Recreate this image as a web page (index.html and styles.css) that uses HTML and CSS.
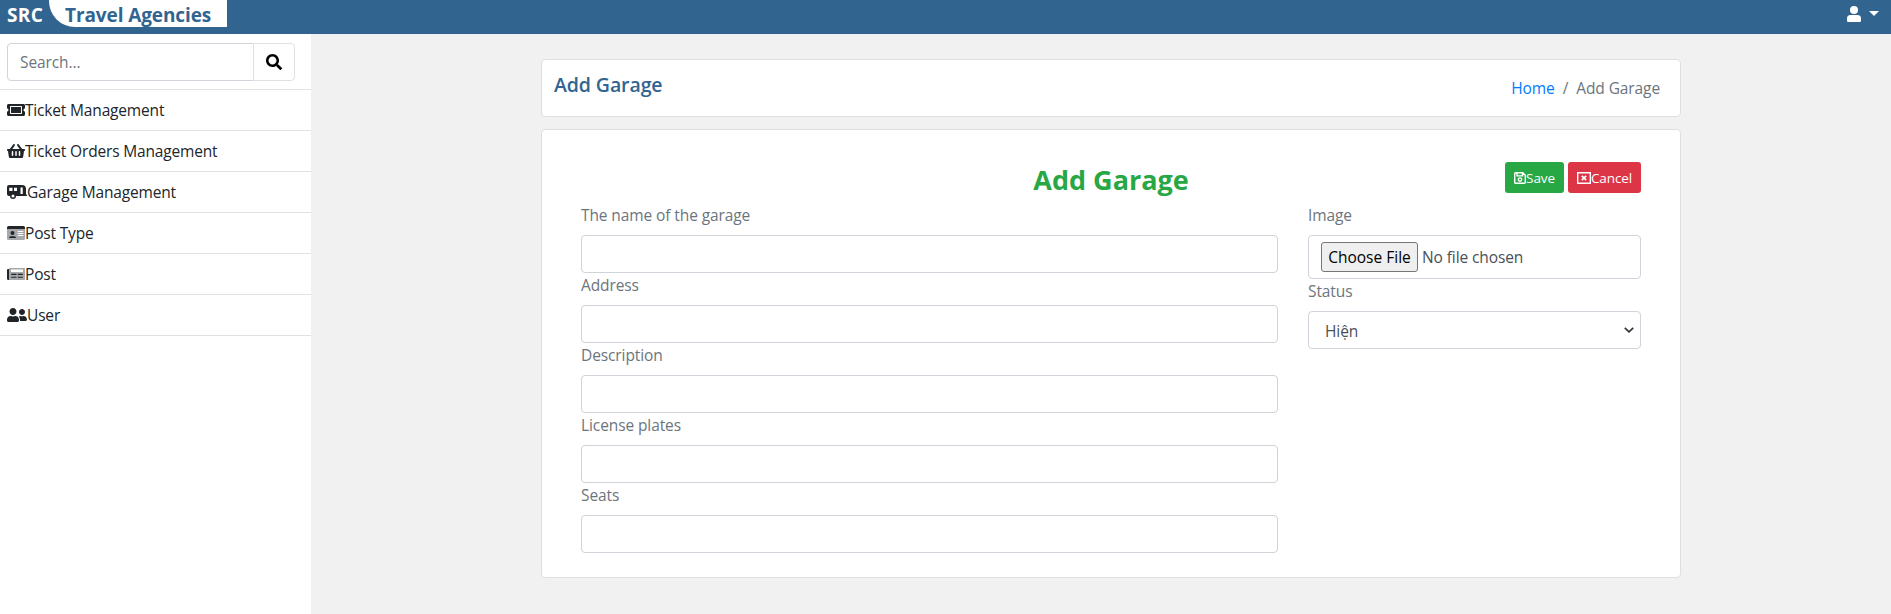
FILE: index.html
```html
<!DOCTYPE html>
<html lang="en">
<head>
<meta charset="utf-8">
<title>Add Garage</title>
<link rel="stylesheet" href="styles.css">
</head>
<body>
<header class="topbar">
  <span class="brand">SRC</span>
  <span class="brand-tab"><span class="brand-name">Travel Agencies</span></span>
  <button class="account" aria-label="Account">
    <svg class="account-icon" viewBox="0 0 14 16"><circle cx="7" cy="4" r="4"/><path d="M3.5 9h7A3.5 3.5 0 0 1 14 12.500V15a1 1 0 0 1-1 1H1a1 1 0 0 1-1-1v-2.500A3.500 3.500 0 0 1 3.500 9z"/></svg>
    <span class="caret"></span>
  </button>
</header>
<div class="shell">
  <aside class="sidebar">
    <form class="search">
      <input class="search-input" type="text" placeholder="Search...">
      <button class="search-button" type="button" aria-label="Search"><svg width="16" height="16" viewBox="0 0 512 512"><path d="M505 442.700L405.300 343c-4.500-4.500-10.600-7-17-7H372c27.600-35.300 44-79.700 44-128C416 93.100 322.900 0 208 0S0 93.100 0 208s93.100 208 208 208c48.300 0 92.700-16.400 128-44v16.300c0 6.400 2.500 12.500 7 17l99.700 99.700c9.400 9.400 24.600 9.400 33.900 0l28.300-28.300c9.400-9.400 9.400-24.600.1-34zM208 336c-70.700 0-128-57.200-128-128 0-70.700 57.200-128 128-128 70.700 0 128 57.200 128 128 0 70.700-57.200 128-128 128z"/></svg></button>
    </form>
    <nav class="menu">
      <a class="menu-item"><svg class="icon" viewBox="0 0 576 512"><path d="M128 160h320v192H128zm400 96c0 26.500 21.500 48 48 48v96c0 26.500-21.500 48-48 48H48c-26.500 0-48-21.500-48-48v-96c26.500 0 48-21.500 48-48s-21.500-48-48-48v-96c0-26.500 21.500-48 48-48h480c26.500 0 48 21.500 48 48v96c-26.500 0-48 21.500-48 48zm-48-104c0-13.300-10.700-24-24-24H120c-13.300 0-24 10.700-24 24v208c0 13.300 10.700 24 24 24h336c13.300 0 24-10.700 24-24z"/></svg>Ticket Management</a>
      <a class="menu-item"><svg class="icon" viewBox="0 0 576 512"><path d="M576 216v16c0 13.300-10.700 24-24 24h-8l-26.100 182.800C514.600 462.400 494.400 480 470.400 480H105.600c-23.900 0-44.100-17.600-47.500-41.200L32 256h-8c-13.300 0-24-10.700-24-24v-16c0-13.300 10.700-24 24-24h67.300l106.800-146.800c10.400-14.300 30.400-17.500 44.700-7.100 14.300 10.400 17.500 30.400 7.100 44.700L170.500 192h235L326.100 82.800c-10.400-14.300-7.200-34.300 7.100-44.700 14.300-10.400 34.300-7.200 44.700 7.100L484.700 192H552c13.300 0 24 10.700 24 24zM312 392V280c0-13.300-10.700-24-24-24s-24 10.700-24 24v112c0 13.300 10.700 24 24 24s24-10.700 24-24zm112 0V280c0-13.300-10.700-24-24-24s-24 10.700-24 24v112c0 13.300 10.700 24 24 24s24-10.700 24-24zm-224 0V280c0-13.300-10.700-24-24-24s-24 10.700-24 24v112c0 13.300 10.700 24 24 24s24-10.700 24-24z"/></svg>Ticket Orders Management</a>
      <a class="menu-item"><svg class="icon icon-wide" viewBox="0 0 640 512"><path fill-rule="evenodd" d="M624 336h-16V160A128 128 0 0 0 480 32H64A64 64 0 0 0 0 96v224a64 64 0 0 0 64 64h32a96 96 0 0 0 192 0h336a16 16 0 0 0 16-16v-16a16 16 0 0 0-16-16zM72 120h104v104H72zM192 432a48 48 0 1 1 0-96 48 48 0 0 1 0 96zM224 120h96v104h-96zM432 320V136a36 36 0 0 1 72 0v184z"/></svg>Garage Management</a>
      <a class="menu-item"><svg class="icon" viewBox="0 0 576 512"><path opacity=".4" d="M0 128v304a48 48 0 0 0 48 48h480a48 48 0 0 0 48-48V128z"/><path d="M528 32H48A48 48 0 0 0 0 80v48h576V80a48 48 0 0 0-48-48zM176 192a64 64 0 1 1 0 128 64 64 0 0 1 0-128zM83 416c-12 0-20-10-17-21 12-24 36-39 63-39h94c27 0 51 15 63 39 3 11-5 21-17 21z"/><path class="paper" d="M344 192h176v32H344zm0 64h176v32H344zm0 64h176v32H344z"/></svg>Post Type</a>
      <a class="menu-item"><svg class="icon" viewBox="0 0 576 512"><path opacity=".4" fill-rule="evenodd" d="M88 64h464a24 24 0 0 1 24 24v336a24 24 0 0 1-24 24H64V88a24 24 0 0 1 24-24zm40 50v80h384v-80z"/><path d="M0 128a32 32 0 0 1 32-32h32v352H48a48 48 0 0 1-48-48zM136 246h168v38H136zm208 0h160v38H344zM136 340h168v38H136zm208 0h160v38H344z"/></svg>Post</a>
      <a class="menu-item"><svg class="icon icon-wide" viewBox="0 0 640 512"><path d="M192 256c61.900 0 112-50.100 112-112S253.900 32 192 32 80 82.100 80 144s50.100 112 112 112zm76.800 32h-8.300c-20.800 10-43.900 16-68.500 16s-47.600-6-68.500-16h-8.300C51.600 288 0 339.600 0 403.200V432c0 26.500 21.500 48 48 48h288c26.500 0 48-21.500 48-48v-28.800c0-63.600-51.600-115.200-115.200-115.200zM480 256c53 0 96-43 96-96s-43-96-96-96-96 43-96 96 43 96 96 96zm48 32h-3.800c-13.900 4.800-28.600 8-44.200 8s-30.300-3.200-44.200-8H432c-20.400 0-39.200 5.900-55.700 15.400 24.400 26.300 39.700 61.200 39.700 99.800v38.400c0 2.200-.5 4.300-.6 6.400H592c26.500 0 48-21.500 48-48 0-61.900-50.100-112-112-112z"/></svg>User</a>
    </nav>
  </aside>
  <main class="content">
    <section class="card heading">
      <h1 class="page-title">Add Garage</h1>
      <nav class="breadcrumb"><a class="home">Home</a><span class="slash">/</span><span>Add Garage</span></nav>
    </section>
    <form class="card editor">
      <div class="editor-head">
        <h2 class="form-title">Add Garage</h2>
        <div class="actions">
          <button type="button" class="btn save"><svg class="btn-icon" width="12" height="14" viewBox="0 0 12 14"><path class="line" d="M1.800 1.700h7l2.500 2.500v7.100a1 1 0 0 1-1 1H1.700a1 1 0 0 1-1-1V2.700a1 1 0 0 1 1-1zM3 1.900v3h5.500v-3"/><circle class="line" cx="6" cy="8.600" r="1.700"/></svg>Save</button>
          <button type="button" class="btn cancel"><svg class="btn-icon" width="14" height="14" viewBox="0 0 14 14"><path class="line" d="M.7 1.700h12.600v10.600H.7z"/><path class="line thick" d="M4.800 4.800l4.400 4.400m0-4.400L4.800 9.200"/></svg>Cancel</button>
        </div>
      </div>
      <div class="columns">
        <div class="column">
          <label class="label" for="name">The name of the garage</label><input class="control" id="name">
          <label class="label" for="address">Address</label><input class="control" id="address">
          <label class="label" for="description">Description</label><input class="control" id="description">
          <label class="label" for="plates">License plates</label><input class="control" id="plates">
          <label class="label" for="seats">Seats</label><input class="control" id="seats">
        </div>
        <div class="column">
          <label class="label" for="image">Image</label><input class="control file" id="image" type="file">
          <label class="label" for="status">Status</label>
          <div class="select-wrap">
            <select class="control select" id="status"><option>Hiện</option></select>
            <svg class="chevron" viewBox="0 0 10 6"><path class="line thick" d="M.8.8L5 4.800 9.200.8"/></svg>
          </div>
        </div>
      </div>
    </form>
  </main>
</div>
</body>
</html>
```
FILE: styles.css
```css
* { box-sizing: border-box; }
body {
  margin: 0;
  height: 614px;
  overflow: hidden;
  display: flex;
  flex-direction: column;
  background: #f1f1f1;
  color: #212529;
  font: 15.5px/24px "Open Sans", "Noto Sans", sans-serif;
  letter-spacing: -.1px;
}
button, input, select { font: inherit; letter-spacing: inherit; }
svg { fill: currentColor; flex: none; }

.topbar {
  height: 34px;
  flex: none;
  display: flex;
  align-items: flex-start;
  background: #326490;
  color: #fff;
  font-size: 19px;
  font-weight: 700;
  line-height: 30px;
}
.brand { width: 49px; padding-left: 7px; letter-spacing: .4px; }
.brand-tab {
  width: 178px;
  height: 27px;
  padding-left: 16px;
  border-bottom-left-radius: 26px;
  background: #fff;
  color: #326490;
}
.brand-name { letter-spacing: -.1px; white-space: nowrap; }
.account {
  display: flex;
  gap: 8px;
  margin-left: auto;
  padding: 6px 12px 0 0;
  border: 0;
  background: none;
  color: #fff;
}
.account-icon { width: 14px; height: 16px; }
.caret { margin-top: 5px; border: 5px solid transparent; border-top-color: #fff; border-bottom: 0; }

.shell { flex: 1; display: flex; }
.sidebar { width: 311px; flex: none; background: #fff; }
.search { display: flex; height: 55px; padding: 9px 16px 8px 7px; }
.search-input {
  width: 247px;
  padding: 0 12px;
  border: 1px solid #ced4da;
  border-radius: 4px 0 0 4px;
  outline: 0;
}
.search-input::placeholder { color: #6c757d; }
.search-button {
  width: 42px;
  margin-left: -1px;
  padding: 3px 0 0;
  border: 1px solid #dee2e6;
  border-radius: 0 4px 4px 0;
  background: #fff;
  color: #000;
}
.menu { border-bottom: 1px solid #dee2e6; letter-spacing: -.17px; }
.menu-item {
  display: flex;
  align-items: center;
  height: 41px;
  padding-left: 7px;
  border-top: 1px solid #dee2e6;
}
.icon { width: 18px; height: 16px; }
.icon-wide { width: 20px; }
.paper { fill: #fff; }

.content {
  width: 1140px;
  display: flex;
  flex-direction: column;
  gap: 12px;
  margin: 25px 0 0 230px;
}
.card { border: 1px solid #dfdfdf; border-radius: 4px; background: #fff; }
.heading {
  height: 58px;
  display: flex;
  justify-content: space-between;
  padding: 13px 20px 0 12px;
}
.page-title { margin: 0; color: #326490; font-size: 19.500px; font-weight: 600; line-height: 24px; letter-spacing: -.1px; }
.breadcrumb { display: flex; padding-top: 3px; color: #6c757d; }
.home { color: #007bff; }
.slash { padding: 0 8px; }

.editor { height: 449px; padding: 32px 39px 0; }
.editor-head { display: grid; grid-template-columns: 1fr auto 1fr; height: 41px; }
.form-title { grid-column: 2; margin: 0; color: #28a745; font-size: 27px; font-weight: 700; line-height: 36px; letter-spacing: 0; }
.actions { display: flex; gap: 4px; justify-content: flex-end; }
.btn {
  display: flex;
  align-items: center;
  justify-content: center;
  height: 31px;
  padding: 0;
  border: 0;
  border-radius: 3px;
  color: #fff;
  font-size: 13.500px;
}
.save { width: 59px; background: #28a745; }
.cancel { width: 73px; background: #dc3545; }
.line { fill: none; stroke: currentColor; stroke-width: 1.400; }
.thick { stroke-width: 1.800; }
.columns { display: grid; grid-template-columns: 697px 333px; justify-content: space-between; }
.column { display: flex; flex-direction: column; }
.label { height: 24px; margin-bottom: 8px; color: #6c757d; }
.control {
  width: 100%;
  height: 38px;
  padding: 6px 12px;
  border: 1px solid #ced4da;
  border-radius: 4px;
  background: #fff;
  color: #495057;
}
.file { height: 44px; }
.select-wrap { position: relative; display: flex; color: #343a40; }
.select { appearance: none; padding: 7px 16px 5px; }
.chevron { position: absolute; right: 7px; top: 16px; width: 10px; height: 6px; pointer-events: none; }
.file::file-selector-button {
  width: 97px;
  height: 30px;
  padding: 0;
  margin-right: 4px;
  border: 1px solid #767676;
  border-radius: 3px;
  background: #efefef;
  color: #000;
  font: inherit;
}
```
